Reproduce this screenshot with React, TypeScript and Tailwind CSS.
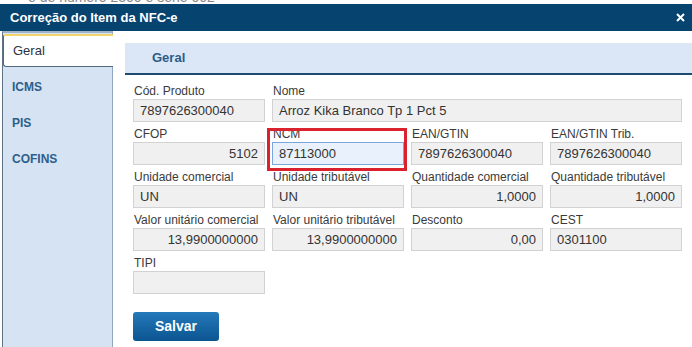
import React from 'react';

interface Campo {
  label: string;
  valor: string;
  alinhar?: 'left' | 'right';
  span?: number;
  destaque?: boolean;
}

const linhas: Campo[][] = [
  [
    { label: 'Cód. Produto', valor: '7897626300040' },
    { label: 'Nome', valor: 'Arroz Kika Branco Tp 1 Pct 5', span: 3 },
  ],
  [
    { label: 'CFOP', valor: '5102', alinhar: 'right' },
    { label: 'NCM', valor: '87113000', destaque: true },
    { label: 'EAN/GTIN', valor: '7897626300040' },
    { label: 'EAN/GTIN Trib.', valor: '7897626300040' },
  ],
  [
    { label: 'Unidade comercial', valor: 'UN' },
    { label: 'Unidade tributável', valor: 'UN' },
    { label: 'Quantidade comercial', valor: '1,0000', alinhar: 'right' },
    { label: 'Quantidade tributável', valor: '1,0000', alinhar: 'right' },
  ],
  [
    { label: 'Valor unitário comercial', valor: '13,9900000000', alinhar: 'right' },
    { label: 'Valor unitário tributável', valor: '13,9900000000', alinhar: 'right' },
    { label: 'Desconto', valor: '0,00', alinhar: 'right' },
    { label: 'CEST', valor: '0301100' },
  ],
  [{ label: 'TIPI', valor: '' }],
];

const abas = ['ICMS', 'PIS', 'COFINS'];

function CampoForm({ campo }: { campo: Campo }) {
  return (
    <div className={`relative ${campo.span === 3 ? 'col-span-3' : ''}`}>
      {campo.destaque && (
        <div className="absolute -left-[5px] -right-[3px] top-[1px] -bottom-[6px] border-[3px] border-[#d9222e] pointer-events-none" />
      )}
      <label className="block h-[15px] text-[12px] leading-[14px] text-[#3a3a3a] pl-[1px]">
        {campo.label}
      </label>
      <div
        className={`h-[23px] border px-[6px] text-[13px] leading-[21px] text-[#333] ${
          campo.destaque ? 'bg-[#e9f1fd] border-[#7aa6d9]' : 'bg-[#f0f0f0] border-[#d2d2d2]'
        } ${campo.alinhar === 'right' ? 'text-right' : 'text-left'}`}
      >
        {campo.valor}
      </div>
    </div>
  );
}

export default function App() {
  return (
    <div className="w-[692px] h-[347px] bg-white overflow-hidden flex flex-col font-['Liberation_Sans',Arial,sans-serif]">
      {/* resto da página por trás do diálogo */}
      <div className="h-[4px] overflow-hidden bg-white">
        <div className="-mt-[11px] pl-[28px] text-[14px] leading-[16px] text-[#8a8a8a] whitespace-nowrap">
          e de número 2300 e série 002
        </div>
      </div>

      <div className="h-[27px] bg-[#06436f] flex items-center justify-between pl-[10px] pr-[5px]">
        <span className="text-white text-[13px] font-bold">Correção do Item da NFC-e</span>
        <svg width="9" height="9" viewBox="0 0 9 9" className="mr-[2px]">
          <path d="M1 1L8 8M8 1L1 8" stroke="white" strokeWidth="2" />
        </svg>
      </div>

      <div className="flex flex-1">
        <aside className="w-[111px] ml-[2px] bg-[#d5e3f3] border-l border-t-2 border-r border-l-[#5f7388] border-t-[#9fb3c8] border-r-[#8ea6c0] pt-[1px] flex flex-col">
          <div className="h-[33px] -mr-[1px] bg-white border-t-2 border-t-[#f1d46a] border-b border-b-[#55697e] border-l border-l-[#55697e] rounded-l-[3px] flex items-center pl-[9px] text-[13px] text-[#2b3440]">
            Geral
          </div>
          <div className="mt-[2px]">
            {abas.map((aba) => (
              <div key={aba} className="h-[36px] flex items-center pl-[9px] text-[12px] font-bold text-[#2e5e8a]">
                {aba}
              </div>
            ))}
          </div>
        </aside>

        <main className="flex-1 pl-[12px] pt-[12px]">
          <div className="h-[32px] bg-[#dbe7f6] border-b-2 border-[#1d4c73] flex items-center pl-[27px] text-[13px] font-bold text-[#2c5c87]">
            Geral
          </div>

          <div className="pl-[8px] pt-[9px]">
            {linhas.map((linha, i) => (
              <div key={i} className="grid grid-cols-[132px_132px_132px_132px] gap-x-[7px] mb-[5px]">
                {linha.map((campo) => (
                  <CampoForm key={campo.label} campo={campo} />
                ))}
              </div>
            ))}

            <button className="mt-[13px] w-[86px] h-[29px] rounded-[3px] bg-gradient-to-b from-[#2379b9] to-[#0b5591] text-white text-[14px] font-bold">
              Salvar
            </button>
          </div>
        </main>
      </div>
    </div>
  );
}
